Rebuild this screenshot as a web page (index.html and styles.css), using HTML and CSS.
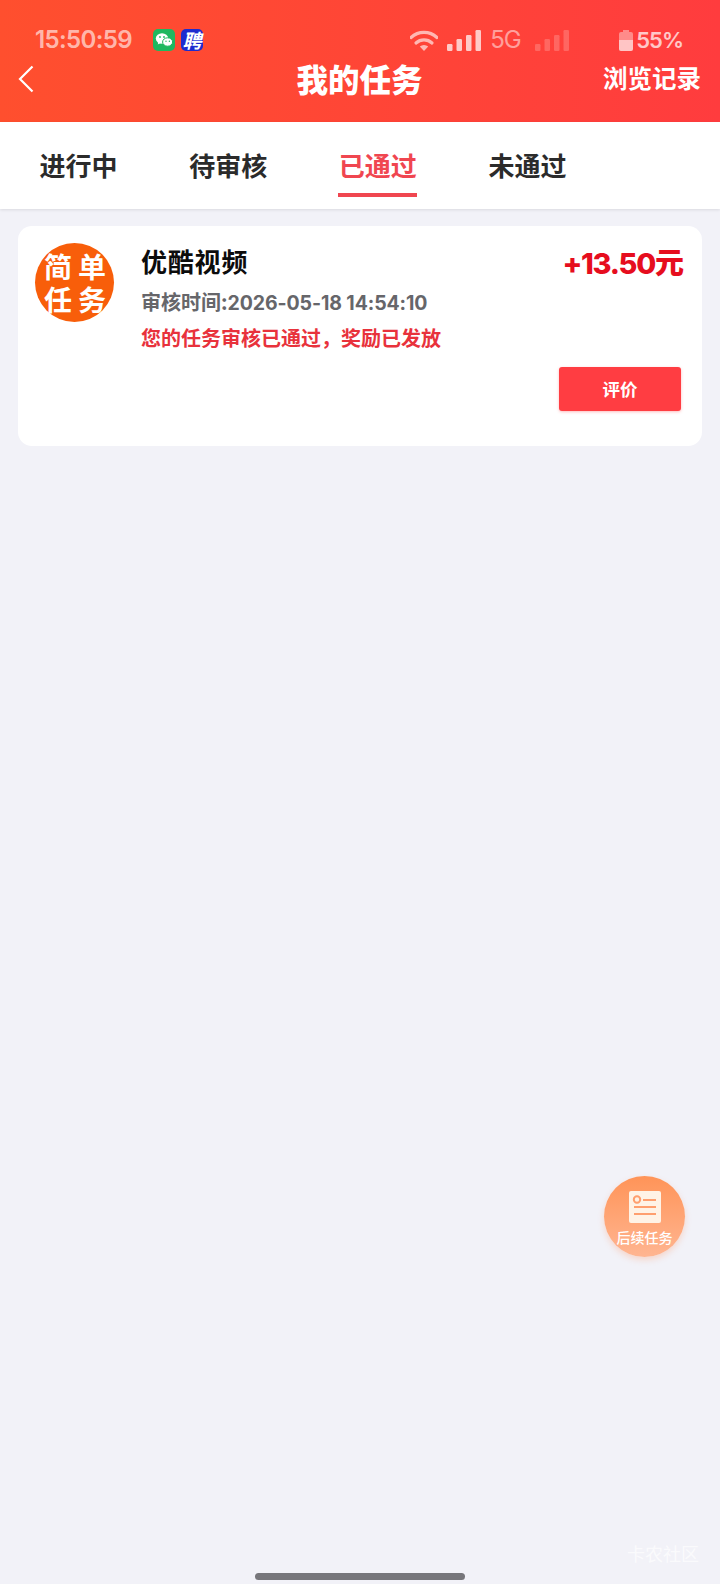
FILE: index.html
```html
<!DOCTYPE html>
<html lang="zh-CN">
<head>
<meta charset="utf-8">
<title>我的任务</title>
<link rel="stylesheet" href="styles.css">
</head>
<body>
<div class="page">
  <header class="header">
    <div class="status">
      <div class="status-left">
        <span class="time">15:50:59</span>
        <span class="app-icon wechat">
          <svg viewBox="0 0 22 22" width="22" height="22"><ellipse cx="9" cy="9.5" rx="6.2" ry="5.2" fill="#fff"/><path d="M5.5 13l-.8 2.6 3-1.6z" fill="#fff"/><ellipse cx="14.6" cy="13" rx="5" ry="4.2" fill="#fff" stroke="#1fb85f" stroke-width="1"/><circle cx="7" cy="8" r=".9" fill="#1fb85f"/><circle cx="11" cy="8" r=".9" fill="#1fb85f"/><circle cx="13" cy="12.2" r=".7" fill="#1fb85f"/><circle cx="16.4" cy="12.2" r=".7" fill="#1fb85f"/></svg>
        </span>
        <span class="app-icon zhaopin">聘</span>
      </div>
      <div class="status-right">
        <svg class="wifi" viewBox="0 0 28 21" width="28" height="21"><path d="M1 7.5a19 19 0 0 1 26 0" fill="none" stroke="currentColor" stroke-width="3.2" stroke-linecap="round"/><path d="M6 13a12 12 0 0 1 16 0" fill="none" stroke="currentColor" stroke-width="3.2" stroke-linecap="round"/><path d="M9.8 16.6a6.2 6.2 0 0 1 8.4 0L14 21z" fill="currentColor"/></svg>
        <svg class="signal" viewBox="0 0 34 21" width="34" height="21"><rect x="0" y="14" width="5.5" height="7" rx="1.2"/><rect x="9.5" y="9" width="5.5" height="12" rx="1.2"/><rect x="19" y="5" width="5.5" height="16" rx="1.2"/><rect x="28.5" y="0" width="5.5" height="21" rx="1.2"/></svg>
        <span class="net">5G</span>
        <svg class="signal dim" viewBox="0 0 34 21" width="34" height="21"><rect x="0" y="14" width="5.5" height="7" rx="1.2"/><rect x="9.5" y="9" width="5.5" height="12" rx="1.2"/><rect x="19" y="5" width="5.5" height="16" rx="1.2"/><rect x="28.5" y="0" width="5.5" height="21" rx="1.2"/></svg>
        <span class="battery-wrap">
          <svg class="battery" viewBox="0 0 14 21" width="14" height="21"><path d="M4 0h6v2h2a2 2 0 0 1 2 2v15a2 2 0 0 1-2 2H2a2 2 0 0 1-2-2V4a2 2 0 0 1 2-2h2z" fill="#fff" opacity=".4"/><path d="M0 10h14v9a2 2 0 0 1-2 2H2a2 2 0 0 1-2-2z" fill="#fff" opacity=".5"/></svg>
          <span class="pct">55%</span>
        </span>
      </div>
    </div>
    <div class="nav">
      <svg class="back" viewBox="0 0 16 28" width="16" height="28"><path d="M14.5 1.5L2 14l12.5 12.5" fill="none" stroke="#fff" stroke-width="2.2"/></svg>
      <h1 class="nav-title">我的任务</h1>
      <span class="nav-link">浏览记录</span>
    </div>
  </header>

  <nav class="tabs">
    <span class="tab">进行中</span>
    <span class="tab">待审核</span>
    <span class="tab active">已通过</span>
    <span class="tab">未通过</span>
  </nav>

  <main class="list">
    <article class="card">
      <div class="badge">
        <span>简</span><span>单</span><span>任</span><span>务</span>
      </div>
      <div class="info">
        <div class="name">优酷视频</div>
        <div class="meta">审核时间:<span class="num">2026-05-18 14:54:10</span></div>
        <div class="msg">您的任务审核已通过，奖励已发放</div>
      </div>
      <div class="side">
        <div class="price"><span class="num">+13.50</span>元</div>
        <button class="rate">评价</button>
      </div>
    </article>
  </main>

  <div class="fab">
    <svg viewBox="0 0 32 32" width="32" height="32"><rect width="32" height="32" rx="2" fill="#fff3e6"/><circle cx="8" cy="8.5" r="3.2" fill="none" stroke="#ff9f6e" stroke-width="2"/><path d="M14 9h13M5 16h22M5 23h22" stroke="#ff9f6e" stroke-width="2" fill="none"/></svg>
    <span>后续任务</span>
  </div>
  <div class="watermark">卡农社区</div>
  <div class="home"></div>
</div>
</body>
</html>
```

FILE: styles.css
```css
* { box-sizing: border-box; }
html, body { margin: 0; padding: 0; }
body { font-family: "Noto Sans CJK SC", "Liberation Sans", sans-serif; }
.page { position: relative; width: 720px; height: 1584px; background: #f2f2f8; overflow: hidden; }

.header { height: 122px; background: linear-gradient(90deg, #ff4f2e 0%, #ff3c3e 100%); padding-top: 29px; color: #fff; }
.status { height: 22px; display: flex; justify-content: space-between; padding: 0 37px 0 35px; color: rgba(255,255,255,.62); }
.status-left, .status-right { display: flex; align-items: center; }
.time { font: 600 24px/22px Inter, "Liberation Sans", sans-serif; letter-spacing: -.6px; width: 118px; }
.app-icon { width: 22px; height: 22px; border-radius: 5px; display: flex; align-items: center; justify-content: center; }
.wechat { background: #1fb85f; margin-right: 6px; }
.zhaopin { background: #1d2bcf; color: #fff; font: italic 700 19px/22px "Noto Sans CJK SC", sans-serif; }
.wifi { margin-right: 9px; }
.signal { fill: rgba(255,255,255,.72); margin-right: 9px; }
.signal.dim { fill: rgba(255,255,255,.2); margin: 0 50px 0 15px; }
.net { font: 400 24px/22px Inter, "Liberation Sans", sans-serif; color: rgba(255,255,255,.5); width: 30px; letter-spacing: -1px; }
.battery-wrap { display: flex; align-items: center; gap: 3px; }
.pct { font: 600 22px/22px Inter, "Liberation Sans", sans-serif; letter-spacing: -1px; color: rgba(255,255,255,.72); }

.nav { height: 48px; margin-top: 3px; display: grid; grid-template-columns: 1fr auto 1fr; align-items: center; padding: 0 19px 0 18px; }
.back { margin-top: 2px; }
.nav-title { margin: 0; font-size: 31.5px; font-weight: 900; line-height: 48px; }
.nav-link { font-size: 24.5px; font-weight: 700; line-height: 48px; justify-self: end; }

.tabs { height: 87px; background: #fff; display: flex; gap: 70.7px; padding-left: 39px; box-shadow: 0 1px 3px rgba(0,0,0,.1); position: relative; }
.tab { height: 75px; padding-top: 20px; font-size: 26px; line-height: 46px; font-weight: 700; color: #2b2b2b; width: 79px; text-align: center; }
.tab.active { color: #f04650; border-bottom: 4px solid #f04650; }

.list { padding: 17px 18px 0; }
.card { height: 220px; background: #fff; border-radius: 14px; padding: 17px 21px 0 17px; display: flex; }
.badge { flex: none; width: 79px; height: 79px; border-radius: 50%; background: #f85e0a; color: #fff; display: grid; grid-template-columns: 1fr 1fr; grid-auto-rows: 33px; padding: 9px 5px 5px 6px; font-family: "Liberation Sans", "Noto Sans CJK SC", sans-serif; font-size: 28px; line-height: 33px; font-weight: 700; text-align: center; }
.info { margin-left: 27px; flex: 1; }
.name { font-size: 26px; line-height: 36px; font-weight: 700; color: #0c0c0c; letter-spacing: .8px; }
.meta { font-size: 20px; line-height: 30px; margin-top: 8px; font-weight: 700; color: #66666a; }
.meta .num { font: 700 19.5px/30px Inter, "Liberation Sans", sans-serif; letter-spacing: -.1px; }
.msg { font-size: 20px; line-height: 30px; margin-top: 5px; font-weight: 700; color: #e8323c; }
.side { flex: none; width: 124px; display: flex; flex-direction: column; align-items: flex-end; }
.price { font-size: 29px; line-height: 40px; font-weight: 900; color: #e60d1e; white-space: nowrap; margin-right: -3px; margin-top: -2px; }
.price .num { font: 800 29px/40px Inter, "Liberation Sans", sans-serif; letter-spacing: -1.3px; }
.rate { width: 122px; height: 44px; margin-top: 83px; border: 0; border-radius: 3px; background: #ff3d42; color: #fff; font: 700 17.5px/44px "Noto Sans CJK SC", sans-serif; padding: 0; box-shadow: 0 1px 3px rgba(255,61,66,.35); }

.fab { position: absolute; left: 604px; top: 1176px; width: 81px; height: 81px; border-radius: 50%; background: linear-gradient(180deg, #ff9458 0%, #ffb591 100%); box-shadow: 0 3px 6px rgba(255,150,100,.3); display: flex; flex-direction: column; align-items: center; color: #fff; padding-top: 15px; }
.fab span { font-size: 14px; line-height: 18px; font-weight: 500; margin-top: 5px; white-space: nowrap; }
.watermark { position: absolute; left: 627px; top: 1541px; font-size: 18px; line-height: 24px; color: rgba(255,255,255,.7); }
.home { position: absolute; left: 255px; top: 1573px; width: 210px; height: 7px; border-radius: 4px; background: #77767b; }
```
